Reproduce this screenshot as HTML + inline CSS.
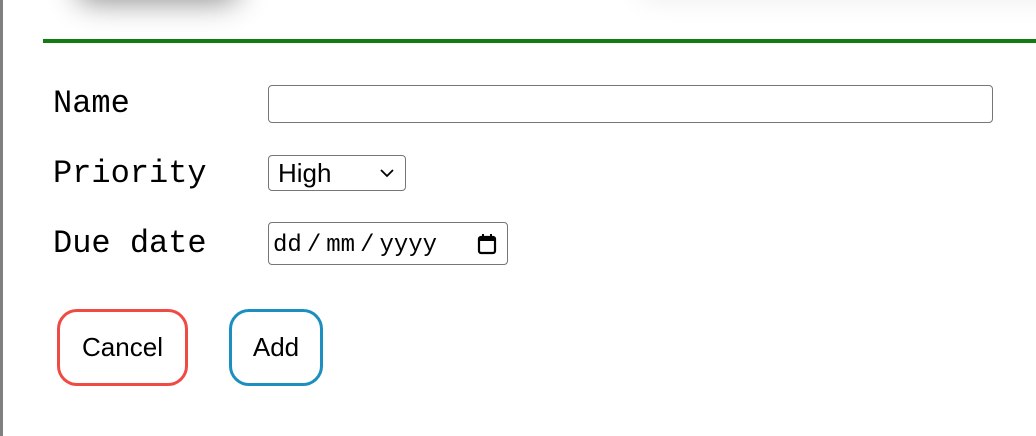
<!DOCTYPE html>
<html><head><style>
html,body{margin:0;padding:0;width:1036px;height:436px;overflow:hidden;background:#fff;position:relative}
.lb{position:absolute;left:0;top:0;width:3px;height:436px;background:#808080}
.sh{position:absolute;left:75px;top:-45px;width:165px;height:35px;border-radius:30px;box-shadow:0 12px 30px rgba(0,0,0,.45)}
.sh2{position:absolute;left:640px;top:-40px;width:500px;height:30px;box-shadow:0 8px 30px rgba(0,0,0,.08)}
.gl{position:absolute;left:43px;top:39px;width:993px;height:4px;background:#137c10}
.lab{position:absolute;left:53px;font-family:"Liberation Mono",monospace;font-size:32px;color:#000;line-height:32px}
.in{position:absolute;border:1px solid #767676;border-radius:4px;box-sizing:border-box;background:#fff}
.btn{position:absolute;box-sizing:border-box;border:3px solid;border-radius:20px;font-family:"Liberation Sans",Arial,sans-serif;font-size:26px;display:flex;align-items:center;justify-content:center;color:#000}
.s{margin:0 5px}
</style></head><body>
<div class="lb"></div>
<div class="sh"></div><div class="sh2"></div>
<div class="gl"></div>
<div class="lab" style="top:88px">Name</div>
<div class="lab" style="top:158px">Priority</div>
<div class="lab" style="top:228px">Due date</div>
<div class="in" style="left:268px;top:85px;width:725px;height:38px"></div>
<div class="in" style="left:268px;top:155px;width:138px;height:36px;font-family:'Liberation Sans',Arial,sans-serif;font-size:26px;line-height:35px;padding-left:9px">High
<svg style="position:absolute;left:110px;top:12px" width="16" height="10" viewBox="0 0 16 10"><path d="M2 2l6 6 6-6" fill="none" stroke="#000" stroke-width="1.8"/></svg></div>
<div class="in" style="left:268px;top:222px;width:240px;height:43px;font-family:'Liberation Mono',monospace;font-size:24px;line-height:45px;padding-left:4px;white-space:pre">dd<span class="s">/</span>mm<span class="s">/</span>yyyy
<svg style="position:absolute;left:207px;top:9px" width="22" height="24" viewBox="0 0 22 24"><rect x="3" y="5" width="16" height="16" rx="2" fill="none" stroke="#000" stroke-width="2.2"/><rect x="3" y="5" width="16" height="4" fill="#000"/><path d="M7 2v4M15 2v4" stroke="#000" stroke-width="2"/></svg></div>
<div class="btn" style="left:57px;top:309px;width:131px;height:77px;border-color:#f04a45">Cancel</div>
<div class="btn" style="left:229px;top:309px;width:94px;height:77px;border-color:#1a8fc0">Add</div>
</body></html>
